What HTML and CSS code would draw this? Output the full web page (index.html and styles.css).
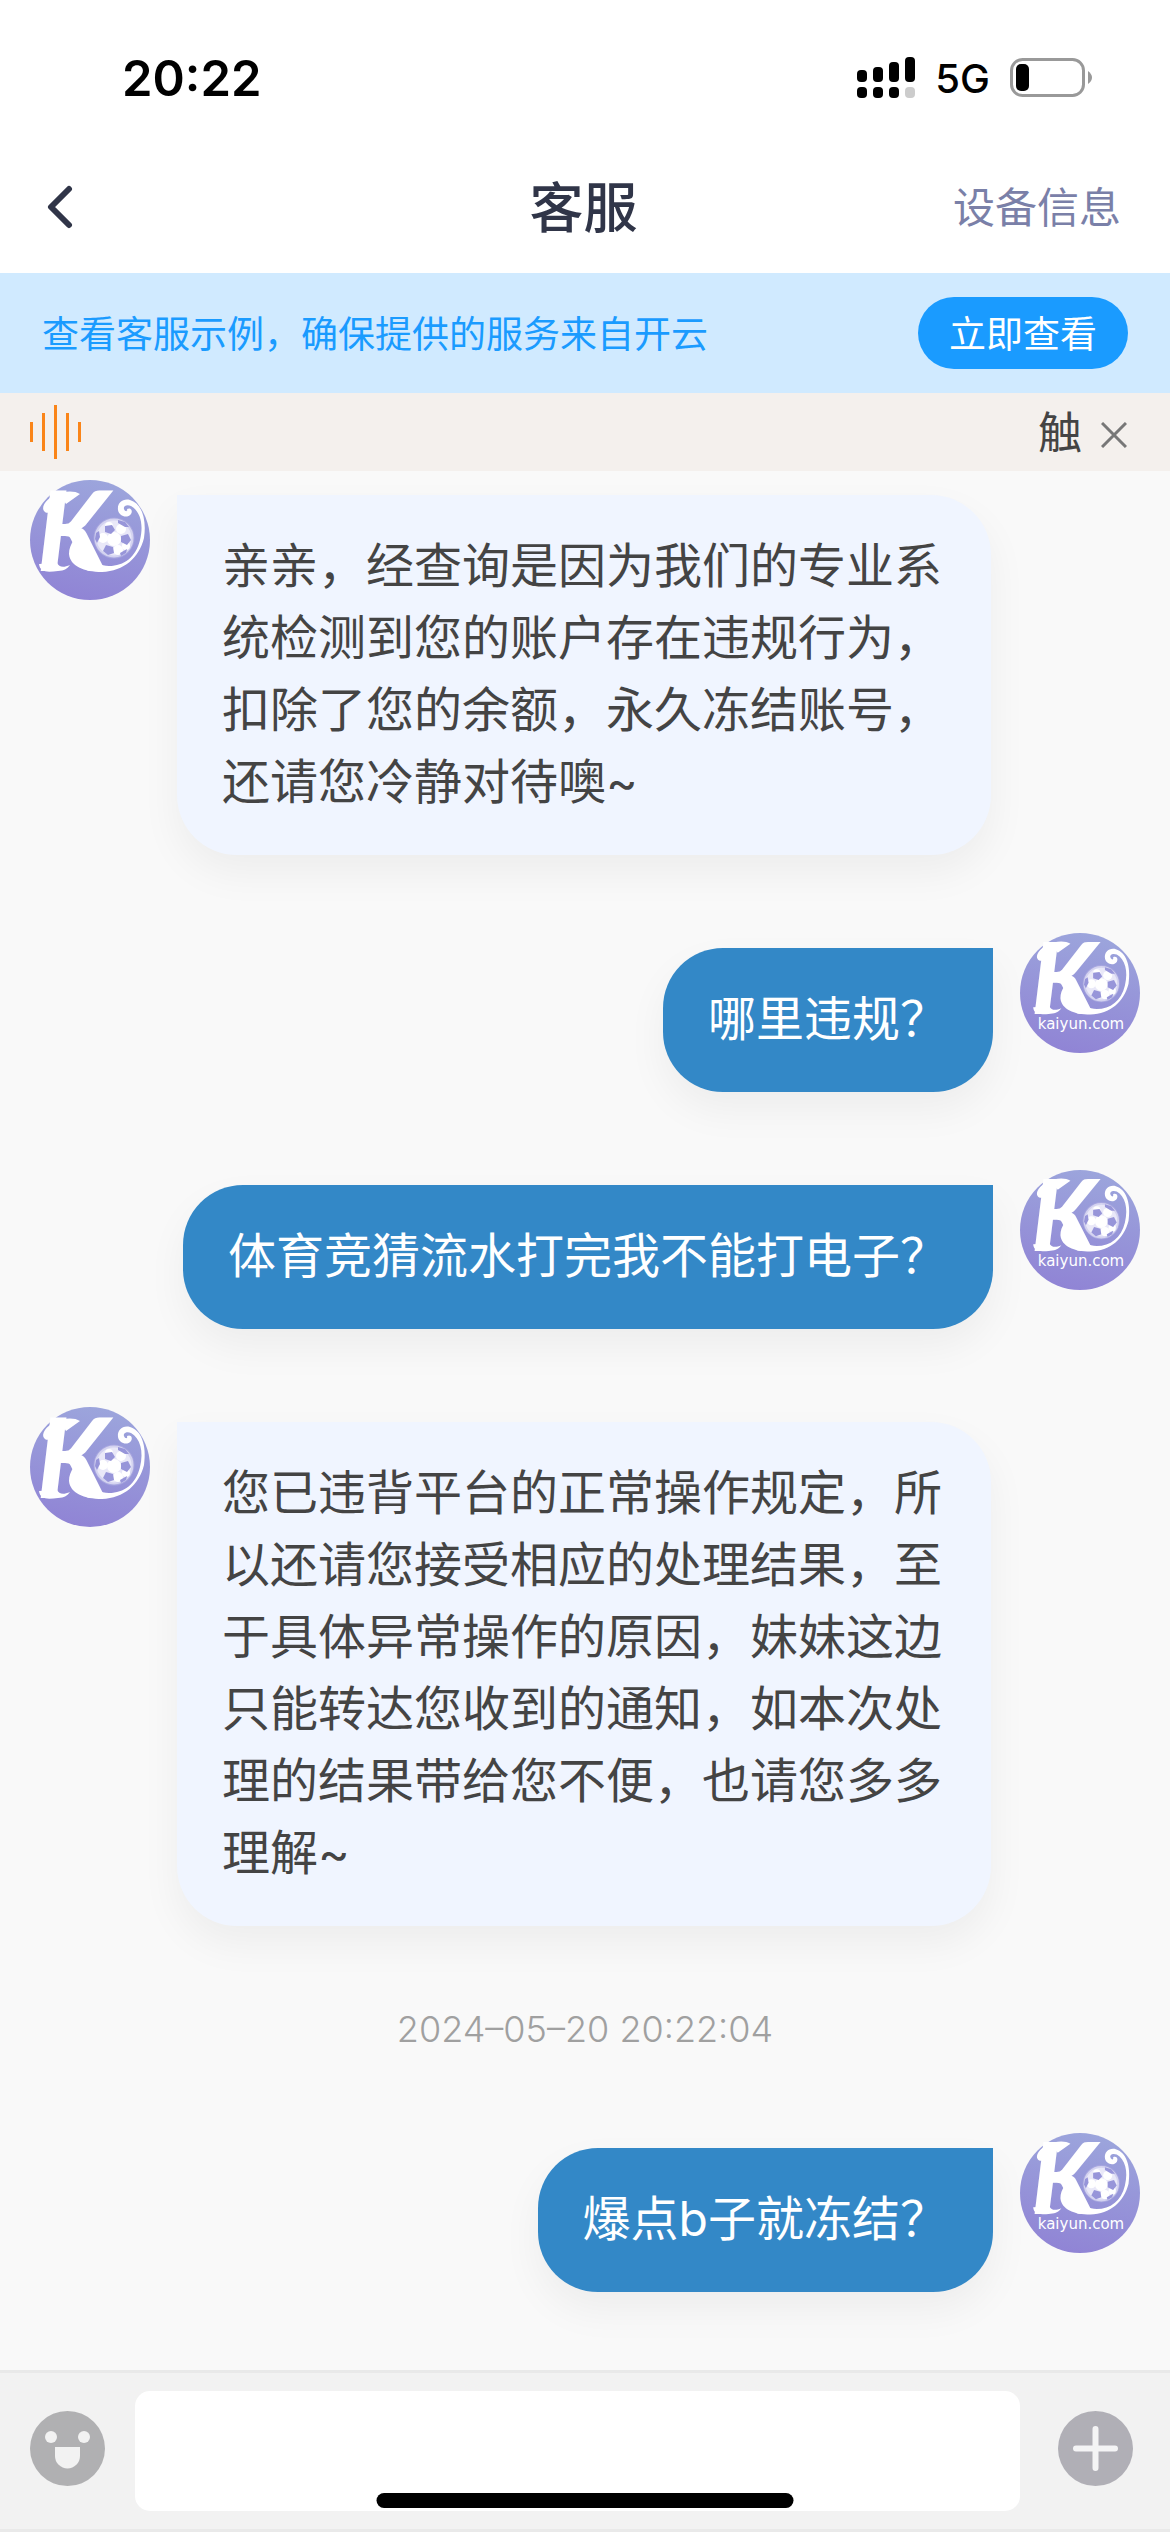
FILE: index.html
```html
<!DOCTYPE html>
<html lang="zh-CN">
<head>
  <meta charset="UTF-8" />
  <meta name="viewport" content="width=device-width, initial-scale=1" />
  <title>客服</title>
  <link rel="stylesheet" href="styles.css">
</head>
<body>

  <!-- shared avatar artwork -->
  <svg class="sprite" aria-hidden="true">
    <defs>
      <linearGradient id="avatar-bg" x1="0.6" y1="0" x2="0.4" y2="1">
        <stop offset="0" stop-color="#9ca5dc" />
        <stop offset="1" stop-color="#9084d5" />
      </linearGradient>
      <symbol id="logo" viewBox="0 0 120 120">
        <text class="logo-letter" x="7" y="91">K</text>
        <path fill="#fff" d="M50 14C44 10 33 11 25 15C16 19 11 27 14 31C17 35 23 32 21 27C25 19 33 17 36 24Z" />
        <path fill="#fff" d="M9 84C10 93 18 92 28 91C34 91 38 88 40 85C33 88 29 87 27 83Z" />
        <path fill="#fff" d="M53 52C46 56 39 64 39 74C40 86 54 92 72 92C94 91 109 78 114 58C117 38 111 23 100 20C93 18 87 23 88 30C89 36 97 39 101 34C103 31 101 27 97 29C98 32 95 32 94 29C93 26 97 24 101 26C110 31 114 44 110 60C106 77 94 86 79 86C62 85 51 73 52 62Z" />
        <circle cx="84" cy="58" r="20.500" fill="#a7a6df" />
        <circle cx="84" cy="58" r="18.500" fill="#e9e8f8" stroke="#d4d3f0" stroke-width="2" />
        <g fill="#fff">
          <circle cx="84" cy="59" r="7" /><circle cx="73" cy="58" r="5" /><circle cx="79" cy="46" r="4" />
          <circle cx="91" cy="49" r="5" /><circle cx="88" cy="70" r="5" /><circle cx="96" cy="66" r="4" />
        </g>
        <g fill="#9795d9">
          <path d="M75 46L82 45L85 50L81 54L75 52Z" />
          <path d="M91 56L98 54L101 60L97 65L91 62Z" />
          <path d="M76 65L83 67L84 73L78 75L73 71Z" />
          <path d="M88 40L95 42L99 47L95 47L88 43Z" />
          <path d="M66 53L69 51L70 57L67 63L65 59Z" />
          <path d="M90 73L97 69L96 73L91 76Z" />
        </g>
      </symbol>
      <symbol id="avatar-service" viewBox="0 0 120 120">
        <circle cx="60" cy="60" r="60" fill="url(#avatar-bg)" />
        <use href="#logo" width="120" height="120" />
      </symbol>
      <symbol id="avatar-user" viewBox="0 0 120 120">
        <circle cx="60" cy="60" r="60" fill="url(#avatar-bg)" />
        <use href="#logo" x="5" y="-2" width="109" height="109" />
        <text class="logo-name" x="61" y="96">kaiyun.com</text>
      </symbol>
    </defs>
  </svg>

  <div class="status-bar">
    <span class="clock">20:22</span>
    <div class="status-icons">
      <svg width="58" height="42" viewBox="0 0 58 42">
        <rect x="0" y="13" width="10" height="12" rx="4" />
        <rect x="16" y="10" width="10" height="15" rx="4" />
        <rect x="32" y="5" width="10" height="20" rx="4" />
        <rect x="48" y="0" width="10" height="25" rx="4" />
        <rect x="0" y="30" width="10" height="11" rx="4" />
        <rect x="16" y="30" width="10" height="11" rx="4" />
        <rect x="32" y="30" width="10" height="11" rx="4" />
        <rect x="48" y="30" width="10" height="11" rx="4" fill="#ccc" />
      </svg>
      <span class="network">5G</span>
      <svg width="82" height="40" viewBox="0 0 82 40">
        <rect x="1.500" y="1.500" width="72" height="36" rx="11" fill="none" stroke="#999" stroke-width="3" />
        <rect x="6" y="6" width="13" height="27" rx="5" />
        <path d="M78 13Q82 16 82 19.500Q82 23 78 26Z" fill="#999" />
      </svg>
    </div>
  </div>

  <header class="header">
    <button type="button" class="back" aria-label="返回">
      <svg width="28" height="44" viewBox="0 0 28 44">
        <path d="M23 4L5 22L23 40" fill="none" stroke="#303548" stroke-width="6" stroke-linecap="round" stroke-linejoin="round" />
      </svg>
    </button>
    <h1>客服</h1>
    <a href="#device" class="device-link">设备信息</a>
  </header>

  <div class="banner">
    <p>查看客服示例，确保提供的服务来自开云</p>
    <button type="button" class="banner-btn">立即查看</button>
  </div>

  <div class="notice">
    <svg width="51" height="54" viewBox="0 0 51 54" stroke="#fa8519" stroke-width="3">
      <path d="M1.500 17V37M13.500 8V46M25.500 0V54M37.500 8V46M49.500 17V37" />
    </svg>
    <span class="notice-text">触</span>
    <button type="button" class="close" aria-label="关闭">
      <svg width="26" height="26" viewBox="0 0 26 26">
        <path d="M1 1L25 25M25 1L1 25" stroke="#777" stroke-width="3" />
      </svg>
    </button>
  </div>

  <main class="chat">
    <div class="row">
      <svg class="avatar"><use href="#avatar-service" /></svg>
      <p class="bubble">亲亲，经查询是因为我们的专业系统检测到您的账户存在违规行为，扣除了您的余额，永久冻结账号，还请您冷静对待噢~</p>
    </div>
    <div class="row mine">
      <svg class="avatar"><use href="#avatar-user" /></svg>
      <p class="bubble">哪里违规？</p>
    </div>
    <div class="row mine">
      <svg class="avatar"><use href="#avatar-user" /></svg>
      <p class="bubble">体育竞猜流水打完我不能打电子？</p>
    </div>
    <div class="row">
      <svg class="avatar"><use href="#avatar-service" /></svg>
      <p class="bubble">您已违背平台的正常操作规定，所以还请您接受相应的处理结果，至于具体异常操作的原因，妹妹这边只能转达您收到的通知，如本次处理的结果带给您不便，也请您多多理解~</p>
    </div>
    <time class="time">2024–05–20 20:22:04</time>
    <div class="row mine">
      <svg class="avatar"><use href="#avatar-user" /></svg>
      <p class="bubble">爆点b子就冻结？</p>
    </div>
  </main>

  <form class="composer">
    <button type="button" class="tool" aria-label="表情">
      <svg width="75" height="75" viewBox="0 0 75 75">
        <circle cx="37.500" cy="37.500" r="37.500" fill="#b0b0b2" />
        <g fill="#f2f2f2">
          <circle cx="21" cy="26" r="6" />
          <circle cx="54" cy="26" r="6" />
          <path d="M25 36H50V45A12.500 12.500 0 0 1 25 45Z" />
        </g>
      </svg>
    </button>
    <input type="text" class="message-input" aria-label="消息" />
    <button type="button" class="tool" aria-label="更多">
      <svg width="75" height="75" viewBox="0 0 75 75">
        <circle cx="37.500" cy="37.500" r="37.500" fill="#b0afb6" />
        <path d="M18 37.500H57M37.500 18V57" stroke="#f4f4f5" stroke-width="6" stroke-linecap="round" />
      </svg>
    </button>
  </form>
  <div class="home-indicator"></div>

</body>
</html>
```

FILE: styles.css
```css
* {
  box-sizing: border-box;
}

body {
  margin: 0;
  min-height: 100vh;
  display: flex;
  flex-direction: column;
  position: relative;
  background: #f9f9f9;
  color: #444;
  font-family: Inter, 'Noto Sans CJK SC', sans-serif;
}

h1, p {
  margin: 0;
}

button {
  padding: 0;
  border: none;
  background: none;
  font-family: inherit;
  cursor: pointer;
}

svg {
  display: block;
  flex: none;
}

.sprite {
  position: absolute;
  width: 0;
  height: 0;
}

.logo-letter {
  font: italic 900 110px Lato, sans-serif;
  fill: #fff;
}

.logo-name {
  font: 15px 'DejaVu Sans', sans-serif;
  fill: #fff;
  text-anchor: middle;
}

/* status bar */
.status-bar {
  height: 141px;
  padding: 15px 78px 0 122px;
  display: flex;
  align-items: center;
  justify-content: space-between;
  background: #fff;
  color: #000;
}

.clock {
  font-size: 49px;
  font-weight: 600;
}

.status-icons {
  display: flex;
  align-items: center;
  gap: 20px;
}

.network {
  font-size: 40px;
  font-weight: 500;
}

/* header */
.header {
  height: 132px;
  padding: 0 49px 0 46px;
  display: grid;
  grid-template-columns: 1fr auto 1fr;
  align-items: center;
  background: #fff;
}

.back {
  justify-self: start;
}

.header h1,
.device-link {
  padding-bottom: 6px;
}

.header h1 {
  font-size: 54px;
  font-weight: 500;
  color: #303548;
}

.device-link {
  justify-self: end;
  font-size: 42px;
  color: #7a80a8;
  text-decoration: none;
}

.banner {
  height: 120px;
  padding: 0 42px;
  display: flex;
  align-items: center;
  justify-content: space-between;
  background: #d0eaff;
  color: #1a9bff;
  font-size: 37px;
}

.banner p,
.banner-btn {
  padding-bottom: 3px;
}

.banner-btn {
  width: 210px;
  height: 72px;
  border-radius: 36px;
  background: #1a9bff;
  color: #fff;
  font-size: 37px;
}

.notice {
  height: 78px;
  padding: 0 43px 0 30px;
  display: flex;
  align-items: center;
  background: #f4f0ed;
}

.notice-text {
  margin-left: auto;
  margin-right: 19px;
  padding-bottom: 4px;
  font-size: 44px;
}

.close {
  padding-top: 6px;
}

/* messages */
.chat {
  flex: 1;
  padding: 9px 30px 78px;
  display: flex;
  flex-direction: column;
  gap: 78px;
}

.row {
  display: flex;
  gap: 27px;
}

.row.mine {
  flex-direction: row-reverse;
}

.avatar {
  width: 120px;
  height: 120px;
}

.bubble {
  max-width: 814px;
  margin-top: 15px;
  padding: 35px 45px 37px;
  border-radius: 0 60px 60px 60px;
  background: #f0f5ff;
  box-shadow: 0 18px 40px rgba(0, 0, 0, 0.05);
  font-size: 48px;
  line-height: 72px;
}

.mine .bubble {
  border-radius: 60px 0 60px 60px;
  background: #3388c7;
  color: #fff;
}

.time {
  text-align: center;
  font-size: 36px;
  font-weight: 300;
  line-height: 51px;
  color: #a0a0a0;
}

/* input bar */
.composer {
  padding: 18px 37px 18px 30px;
  display: flex;
  align-items: center;
  gap: 30px;
  border-top: 3px solid #e9e9e9;
  border-bottom: 3px solid #e9e9e9;
  background: #f2f2f2;
}

.tool {
  padding-bottom: 6px;
}

.message-input {
  flex: 1;
  min-width: 0;
  height: 120px;
  margin-right: 8px;
  padding: 0 30px;
  border: none;
  border-radius: 15px;
  background: #fff;
  font-size: 48px;
}

.home-indicator {
  position: absolute;
  left: 50%;
  bottom: 24px;
  width: 417px;
  height: 15px;
  border-radius: 8px;
  background: #000;
  transform: translateX(-50%);
}
```
